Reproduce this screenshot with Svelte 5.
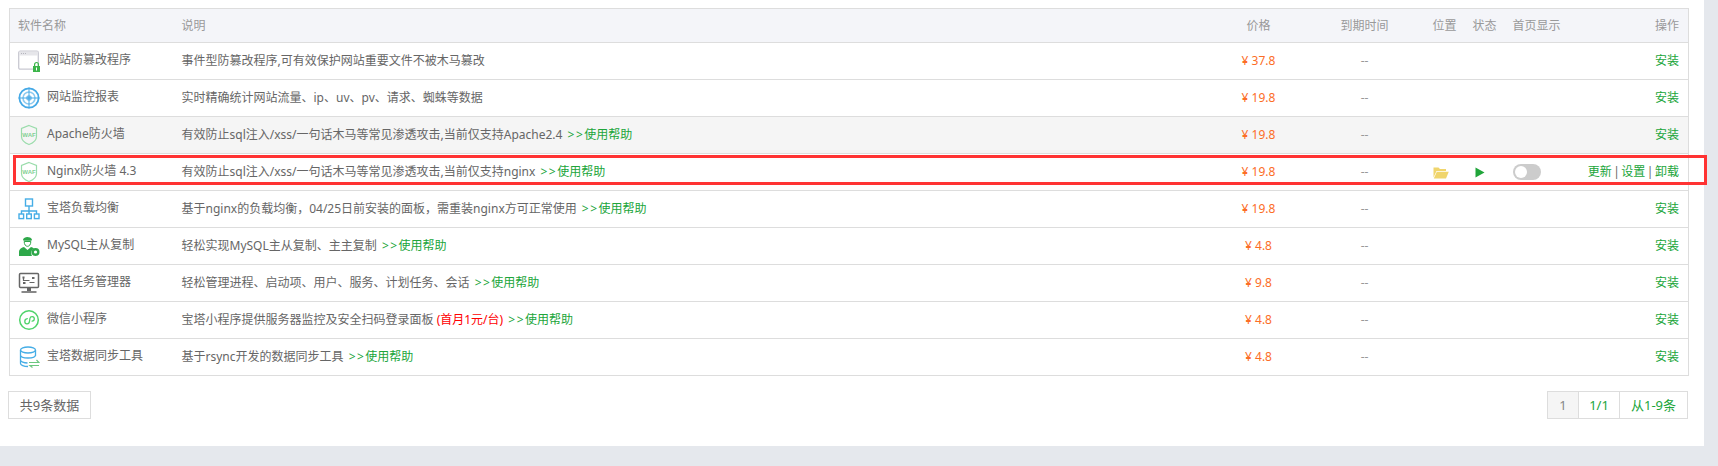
<script>
  const rows = [
    { icon: 'lock', name: '网站防篡改程序', desc: '事件型防篡改程序,可有效保护网站重要文件不被木马篡改', price: '37.8' },
    { icon: 'radar', name: '网站监控报表', desc: '实时精确统计网站流量、ip、uv、pv、请求、蜘蛛等数据', price: '19.8' },
    { icon: 'waf', name: 'Apache防火墙', desc: '有效防止sql注入/xss/一句话木马等常见渗透攻击,当前仅支持Apache2.4', link: true, price: '19.8', hover: true },
    { icon: 'waf', name: 'Nginx防火墙 4.3', desc: '有效防止sql注入/xss/一句话木马等常见渗透攻击,当前仅支持nginx', link: true, price: '19.8', installed: true },
    { icon: 'tree', name: '宝塔负载均衡', desc: '基于nginx的负载均衡，04/25日前安装的面板，需重装nginx方可正常使用', link: true, price: '19.8' },
    { icon: 'user', name: 'MySQL主从复制', desc: '轻松实现MySQL主从复制、主主复制', link: true, price: '4.8' },
    { icon: 'monitor', name: '宝塔任务管理器', desc: '轻松管理进程、启动项、用户、服务、计划任务、会话', link: true, price: '9.8' },
    { icon: 'mini', name: '微信小程序', desc: '宝塔小程序提供服务器监控及安全扫码登录面板', promo: '(首月1元/台)', link: true, price: '4.8' },
    { icon: 'db', name: '宝塔数据同步工具', desc: '基于rsync开发的数据同步工具', link: true, price: '4.8' }
  ];
</script>

<main>
  <div class="wrap">
    <table>
      <thead>
        <tr>
          <th class="c-name">软件名称</th>
          <th>说明</th>
          <th class="c-price">价格</th>
          <th class="c-date">到期时间</th>
          <th class="c-pos">位置</th>
          <th class="c-state">状态</th>
          <th class="c-home">首页显示</th>
          <th class="c-op">操作</th>
        </tr>
      </thead>
      <tbody>
        {#each rows as row}
          <tr class:hover={row.hover} class:selected={row.installed}>
            <td>
              <div class="name">
                <svg class="icon" viewBox="0 0 22 22" width="22" height="22">
                  {#if row.icon === 'lock'}
                    <rect x="0.7" y="1.2" width="19.6" height="18" rx="1.5" fill="#fff" stroke="#c9c9d2" stroke-width="1.3"/>
                    <rect x="1" y="1.5" width="19" height="4" fill="#e6e6ea"/>
                    <path d="M3 3.5h1M5 3.5h1M7 3.5h1" stroke="#b5b5bd" stroke-width="1"/>
                    <rect x="15" y="16" width="7" height="6" fill="#3cb54a"/>
                    <path d="M16.600 16v-1.600a1.900 1.900 0 0 1 3.800 0V16" fill="none" stroke="#3cb54a" stroke-width="1.200"/>
                    <rect x="18" y="17.500" width="1" height="3" fill="#fff"/>
                  {:else if row.icon === 'radar'}
                    <circle cx="11" cy="11" r="9.600" fill="none" stroke="#45a9e6" stroke-width="1.800"/>
                    <circle cx="11" cy="11" r="6" fill="none" stroke="#8ccaf0" stroke-width="1.600"/>
                    <circle cx="11" cy="11" r="2.800" fill="#7cc0ec"/>
                    <path d="M11 0.500v21M0.500 11h21" stroke="#45a9e6" stroke-width="1"/>
                  {:else if row.icon === 'waf'}
                    <path d="M11 1.500l7.500 3v8c0 4-3.500 6.500-7.500 8-4-1.500-7.500-4-7.500-8v-8z" fill="none" stroke="#9adcab" stroke-width="1.200"/>
                    <text x="11" y="13" class="waf">WAF</text>
                  {:else if row.icon === 'tree'}
                    <rect x="7.500" y="1" width="7" height="7" fill="none" stroke="#45ade6" stroke-width="1.400"/>
                    <path d="M11 8v5M3.500 16v-3h15v3M11 13v3" fill="none" stroke="#45ade6" stroke-width="1.400"/>
                    <rect x="1" y="16" width="4.600" height="4.600" fill="none" stroke="#45ade6" stroke-width="1.400"/>
                    <rect x="8.700" y="16" width="4.600" height="4.600" fill="none" stroke="#45ade6" stroke-width="1.400"/>
                    <rect x="16.400" y="16" width="4.600" height="4.600" fill="none" stroke="#45ade6" stroke-width="1.400"/>
                  {:else if row.icon === 'user'}
                    <path d="M5 4.500c1-3 7-3.500 9 0l-.6 1.200H5.600z" fill="#2ea84a"/>
                    <path d="M6.200 6.500h6.600c0 3-1.400 4.800-3.300 4.800S6.200 9.500 6.200 6.500z" fill="#fff" stroke="#2ea84a" stroke-width="1"/>
                    <path d="M1 21v-4c0-3 3-4.500 5-5l3.500 3 3.500-3c1 .2 2 .7 3 1.500-2.500 1-3.500 4-2 7.500z" fill="#2ea84a"/>
                    <circle cx="17.500" cy="17" r="4" fill="#2ea84a"/>
                    <circle cx="17.500" cy="17" r="1.600" fill="#fff"/>
                  {:else if row.icon === 'monitor'}
                    <rect x="1.500" y="1.500" width="19" height="14" rx="1" fill="#fff" stroke="#666" stroke-width="1.500"/>
                    <path d="M5.500 5.500v3h6M11.500 10.500h5" fill="none" stroke="#666" stroke-width="1.200"/>
                    <rect x="4.500" y="4.500" width="2" height="2" fill="#666"/>
                    <rect x="14" y="5" width="2.500" height="2" fill="#666"/>
                    <rect x="5" y="10" width="2.500" height="2" fill="#666"/>
                    <rect x="9" y="16" width="4" height="3" fill="#666"/>
                    <rect x="3.500" y="19" width="15" height="2" fill="#888"/>
                  {:else if row.icon === 'mini'}
                    <circle cx="11" cy="11" r="9.300" fill="none" stroke="#4fd36a" stroke-width="1.500"/>
                    <path d="M6.800 12.500c0 3 4 3.200 4.600 .5l.5-3.500c.5-2.800 4.400-2.500 4.400 .3 0 1.500-1.200 2.300-2.200 2.400M9.300 9.700c-1.400 .2-2.500 1.300-2.500 2.800" fill="none" stroke="#4fd36a" stroke-width="1.300" stroke-linecap="round"/>
                  {:else}
                    <ellipse cx="10" cy="4" rx="7.500" ry="3" fill="none" stroke="#45ade6" stroke-width="1.300"/>
                    <path d="M2.500 4v13.500c0 1.600 3.300 3 7.500 3M17.500 4v6M2.500 9c0 1.700 3.300 3 7.500 3s7.500-1.300 7.500-3M2.500 14c0 1.700 3.300 3 7 3" fill="none" stroke="#45ade6" stroke-width="1.300"/>
                    <path d="M11 16.500h10l-2.500-2.500M21 19.500h-9l2.500 2" fill="none" stroke="#6cc77f" stroke-width="1.200"/>
                  {/if}
                </svg>
                <span class="label">{row.name}</span>
              </div>
            </td>
            <td>
              {row.desc}
              {#if row.promo}<span class="promo">{row.promo}</span>{/if}
              {#if row.link}<a href="#help"><span class="arrows">&gt;&gt;</span>使用帮助</a>{/if}
            </td>
            <td class="c-price price">¥ {row.price}</td>
            <td class="c-date">--</td>
            <td class="c-pos">
              {#if row.installed}
                <svg viewBox="0 0 16 13" width="16" height="13" class="folder">
                  <path d="M0.500 11.500V1.500h5l1.500 1.500h6v2H3.500z" fill="#f0d56c"/>
                  <path d="M3.800 5.800H15.800L13 12.500H0.800z" fill="#f0d56c"/>
                </svg>
              {/if}
            </td>
            <td class="c-state">
              {#if row.installed}
                <svg viewBox="0 0 10 11" width="10" height="11" class="play"><path d="M0.500 0.500L9.500 5.500L0.500 10.500z" fill="#20a53a"/></svg>
              {/if}
            </td>
            <td class="c-home">
              {#if row.installed}<span class="toggle"><i></i></span>{/if}
            </td>
            <td class="c-op">
              {#if row.installed}
                <a href="#u">更新</a> | <a href="#s">设置</a> | <a href="#r">卸载</a>
              {:else}
                <a href="#i">安装</a>
              {/if}
            </td>
          </tr>
        {/each}
      </tbody>
    </table>

    <div class="footer">
      <span class="count">共9条数据</span>
      <div class="pager">
        <span class="cur">1</span>
        <a class="pg" href="#p">1/1</a>
        <a class="rg" href="#r">从1-9条</a>
      </div>
    </div>
  </div>
</main>

<style>
  :global(body) {
    margin: 0;
    background: #e5e8ed;
  }

  main {
    width: 1704px;
    height: 446px;
    background: #fff;
    box-sizing: border-box;
    padding: 8px 15px 0 8px;
    font-family: "Noto Sans", "Noto Sans CJK SC", sans-serif;
    font-size: 12px;
    line-height: 16px;
    color: #666;
  }

  table {
    width: 1680px;
    margin-left: 1px;
    border-collapse: collapse;
    table-layout: fixed;
    border: 1px solid #ddd;
  }

  th {
    height: 34px;
    padding: 0;
    box-sizing: border-box;
    background: #f4f5f9;
    font-weight: normal;
    text-align: left;
    color: #999;
    border-bottom: 1px solid #ddd;
  }

  th.c-name, td:first-child {
    padding-left: 8px;
    box-sizing: border-box;
  }

  td {
    height: 37px;
    padding: 0;
    box-sizing: border-box;
    border-bottom: 1px solid #ddd;
    white-space: nowrap;
  }

  .c-name { width: 172px; }

  .c-price {
    width: 100px;
    text-align: center;
  }

  td.price { color: #fc6d26; }

  .c-date {
    width: 124px;
    text-align: center;
    padding-right: 12px;
    box-sizing: border-box;
    color: #999;
  }

  .c-pos, .c-state { width: 40px; }

  .c-home { width: 66px; }

  .c-op {
    width: 110px;
    text-align: right;
    padding-right: 9px;
    box-sizing: border-box;
    word-spacing: -1.6px;
  }

  tr.hover td { background: #f5f5f5; }

  tr.selected {
    position: relative;
  }

  /* the red marker drawn over the installed row */
  tr.selected td:first-child::before {
    content: "";
    position: absolute;
    left: 3px;
    top: 1px;
    width: 1694px;
    height: 30px;
    box-sizing: border-box;
    border: 3px solid #ff3333;
    pointer-events: none;
  }

  .name {
    display: flex;
    align-items: center;
    gap: 7px;
  }

  .icon { flex: none; }

  .label { margin-top: -3px; }

  .waf {
    font: bold 6px "Liberation Sans", sans-serif;
    fill: #7fd093;
    text-anchor: middle;
  }

  a {
    color: #20a53a;
    text-decoration: none;
  }

  .arrows {
    letter-spacing: 1.5px;
    margin-left: 2px;
  }

  .promo { color: #ff0000; }

  .folder, .play { vertical-align: middle; }

  .play { margin-left: 2px; }

  .toggle {
    display: inline-block;
    width: 28px;
    height: 16px;
    border-radius: 8px;
    background: #ccc;
    vertical-align: middle;
    position: relative;
  }

  .toggle i {
    position: absolute;
    left: 2px;
    top: 2px;
    width: 12px;
    height: 12px;
    border-radius: 50%;
    background: #fff;
  }

  .footer {
    display: flex;
    justify-content: space-between;
    align-items: flex-start;
    margin-top: 15px;
    padding-right: 1px;
    font-size: 13px;
  }

  .count, .pager > * {
    display: block;
    height: 26px;
    line-height: 26px;
    border: 1px solid #ddd;
    box-sizing: content-box;
    text-align: center;
  }

  .count { width: 81px; }

  .pager { display: flex; }

  .pager > * { margin-left: -1px; }

  .cur {
    width: 30px;
    background: #f5f5f5;
    color: #888;
  }

  .pg { width: 40px; }

  .rg { width: 67px; }
</style>
